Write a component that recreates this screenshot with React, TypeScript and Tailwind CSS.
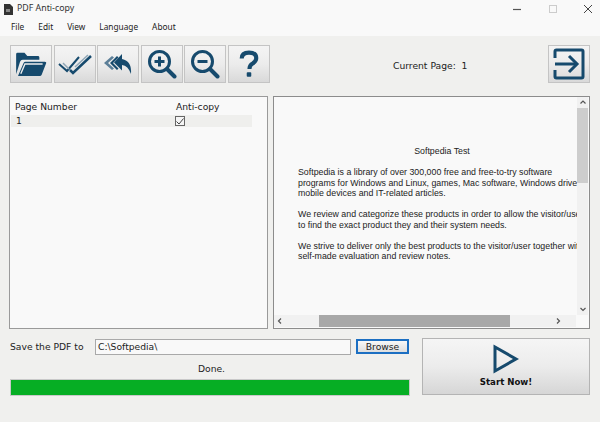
const blue = "#164a6d";

const toolClass =
  "w-[42px] h-[38px] shrink-0 flex items-center justify-center border border-[#c4c4c4] bg-gradient-to-b from-[#f4f4f4] via-[#ececec] to-[#d9d9d9]";

const IconFolder = () => (
  <svg width="34" height="26" viewBox="0 0 34 28">
    <path d="M1 25V3.500Q1 2 2.500 2H10l3 3.500h11.500Q26 5.500 26 7v2.500H8Q6 9.500 5.200 11.500L1 25z" fill={blue} />
    <path d="M3 27l6-14q.6-1.500 2-1.500h21q2 0 1.300 1.800L28.500 25.500q-.6 1.500-2 1.500H3z" fill={blue} />
    <path d="M6 24.500l4.500-10.500h19" fill="none" stroke="#eeeeee" strokeWidth="1.500" />
  </svg>
);

const IconChecks = () => (
  <svg width="34" height="22" viewBox="0 0 34 22">
    <path d="M1 11l8 7 L21 4" fill="none" stroke={blue} strokeWidth="2" />
    <path d="M5 10l6 6" fill="none" stroke="#8fa6b6" strokeWidth="1.500" />
    <path d="M12 17l3 3L33 3" fill="none" stroke={blue} strokeWidth="2.500" />
    <path d="M17 14L30 2" fill="none" stroke="#8fa6b6" strokeWidth="1.500" />
  </svg>
);

const IconReplyAll = () => (
  <svg width="30" height="22" viewBox="0 0 30 22">
    <path d="M9 3L1 10l8 7 2-1.500L5 10l6-5.500z" fill="#5c7f98" />
    <path d="M14 3L7 10l7 7 1.500-1.500L10 10l5.500-5.500z" fill={blue} />
    <path d="M19 1l-8 8.500 8 8V12q6 .5 9 9 1-13-9-15z" fill={blue} />
  </svg>
);

const IconZoom = ({ plus }: { plus?: boolean }) => (
  <svg width="30" height="30" viewBox="0 0 30 30">
    <circle cx="12.500" cy="12.500" r="10" fill="none" stroke={blue} strokeWidth="3" />
    <path d="M20 20l7.500 7.500" stroke={blue} strokeWidth="4" strokeLinecap="round" />
    <path d="M7.500 12.500h10" stroke={blue} strokeWidth="3" />
    {plus && <path d="M12.500 7.500v10" stroke={blue} strokeWidth="3" />}
  </svg>
);

const IconHelp = () => (
  <svg width="20" height="28" viewBox="0 0 22 30">
    <path d="M3 9q0-6.500 8-6.500 8 0 8 6 0 3.500-4 6-3.500 2-3.500 6" fill="none" stroke={blue} strokeWidth="4.500" />
    <rect x="8.500" y="24" width="5" height="5" rx="1" fill={blue} />
  </svg>
);

const IconExit = () => (
  <svg width="32" height="32" viewBox="0 0 32 32">
    <path d="M2 10V3.500Q2 2 3.500 2h25Q30 2 30 3.500v25q0 1.500-1.500 1.500h-25Q2 30 2 28.500V22" fill="none" stroke={blue} strokeWidth="3" />
    <path d="M2 16h21" stroke={blue} strokeWidth="3" />
    <path d="M16 8l8 8-8 8" fill="none" stroke={blue} strokeWidth="3" />
  </svg>
);

export default function App() {
  return (
    <div className="w-[600px] h-[422px] flex flex-col bg-[#f0f0ee] text-[#222] overflow-hidden font-['DejaVu_Sans',sans-serif] text-[9.2px]">
      {/* title + menu */}
      <div className="bg-[#f9f9f9] h-[36px] shrink-0">
        <div className="h-[18px] flex items-center pl-[4px] font-['Noto_Sans',sans-serif] text-[8.8px] text-[#333]">
          <svg width="9" height="11" viewBox="0 0 9 11" className="mr-[4px]">
            <path d="M0 0h6l3 3v8H0z" fill="#333" />
            <path d="M2 5h4v3H2z" fill="#888" />
          </svg>
          <span>PDF Anti-copy</span>
          <div className="ml-auto flex items-center text-[#444]">
            <svg width="10" height="10" viewBox="0 0 10 10" className="mr-[25px]">
              <path d="M0 5.500h8" stroke="#555" strokeWidth="1.200" />
            </svg>
            <svg width="10" height="10" viewBox="0 0 10 10" className="mr-[25px]">
              <rect x="1.500" y="1.500" width="7" height="7" fill="none" stroke="#ccc" />
            </svg>
            <svg width="10" height="10" viewBox="0 0 10 10" className="mr-[7px]">
              <path d="M1 1l8 8M9 1l-8 8" stroke="#444" strokeWidth="1" />
            </svg>
          </div>
        </div>
        <div className="h-[18px] flex items-center gap-[14px] pl-[11px] font-['Noto_Sans',sans-serif] text-[8.300px]">
          <span>File</span>
          <span>Edit</span>
          <span>View</span>
          <span>Language</span>
          <span>About</span>
        </div>
      </div>

      {/* toolbar */}
      <div className="flex items-center h-[38px] mt-[9px] pl-[10px] pr-[10px] shrink-0">
        <div className="flex gap-[1.600px]">
          <div className={toolClass}><IconFolder /></div>
          <div className={toolClass}><IconChecks /></div>
          <div className={toolClass}><IconReplyAll /></div>
          <div className={toolClass}><IconZoom plus /></div>
          <div className={toolClass}><IconZoom /></div>
          <div className={toolClass}><IconHelp /></div>
        </div>
        <div className="ml-[123px] mt-[3px]">Current Page:&nbsp; 1</div>
        <div className={toolClass + " ml-auto"}><IconExit /></div>
      </div>

      {/* panels */}
      <div className="flex gap-[5px] h-[233px] mt-[13px] pl-[9px] pr-[10px] shrink-0">
        <div className="w-[259px] border border-[#9a9a9a] bg-[#f9f9f9] pl-[1px] pt-[1px]">
          <div className="w-[241px] h-[17px] flex items-center">
            <span className="w-[161px] pl-[4px]">Page Number</span>
            <span className="pl-[4px]">Anti-copy</span>
          </div>
          <div className="w-[241px] h-[12px] flex items-center bg-[#efefed]">
            <span className="w-[161px] pl-[5px]">1</span>
            <span className="w-[10px] h-[10px] ml-[3px] border border-[#666] flex items-center justify-center bg-[#f5f5f5]">
              <svg width="8" height="7" viewBox="0 0 8 7">
                <path d="M0.500 3.500l2.500 2.500L7.500 0.500" fill="none" stroke="#444" strokeWidth="1" />
              </svg>
            </span>
          </div>
        </div>

        <div className="flex-1 border border-[#8c8c8c] bg-[#f9f9f9] flex flex-col min-w-0">
          <div className="flex-1 flex min-h-0">
            <div className="flex-1 min-w-0 overflow-hidden whitespace-nowrap font-['Liberation_Sans',sans-serif] text-[8.800px] leading-[10.500px] text-[#222] pl-[24px] pt-[49px]">
              <div className="w-[288px] text-center">Softpedia Test</div>
              <div className="mt-[10.500px]">Softpedia is a library of over 300,000 free and free-to-try software</div>
              <div>programs for Windows and Linux, games, Mac software, Windows drivers,</div>
              <div>mobile devices and IT-related articles.</div>
              <div className="mt-[10.500px]">We review and categorize these products in order to allow the visitor/user</div>
              <div>to find the exact product they and their system needs.</div>
              <div className="mt-[10.500px]">We strive to deliver only the best products to the visitor/user together with</div>
              <div>self-made evaluation and review notes.</div>
            </div>
            <div className="w-[11px] mr-[1px] shrink-0 bg-[#f1f1f1] flex flex-col items-center">
              <svg width="8" height="11" viewBox="0 0 8 11" className="shrink-0">
                <path d="M1.500 6.500L4 4l2.500 2.500" fill="none" stroke="#555" strokeWidth="1.200" />
              </svg>
              <div className="w-full h-[75px] bg-[#cdcdcd]" />
              <div className="flex-1" />
              <svg width="8" height="11" viewBox="0 0 8 11" className="shrink-0">
                <path d="M1.500 4L4 6.500 6.500 4" fill="none" stroke="#555" strokeWidth="1.200" />
              </svg>
            </div>
          </div>
          <div className="h-[12px] mb-[1px] mr-[13px] bg-[#f1f1f1] flex items-center shrink-0">
            <svg width="8" height="8" viewBox="0 0 8 8" className="ml-[2px] shrink-0">
              <path d="M5 1.500L2.500 4 5 6.500" fill="none" stroke="#555" strokeWidth="1.200" />
            </svg>
            <div className="ml-[35px] w-[191px] h-full bg-[#a8a8a8]" />
            <div className="flex-1" />
            <svg width="8" height="8" viewBox="0 0 8 8" className="mr-[14px] shrink-0">
              <path d="M3 1.500L5.500 4 3 6.500" fill="none" stroke="#555" strokeWidth="1.200" />
            </svg>
          </div>
        </div>
      </div>

      {/* bottom */}
      <div className="flex mt-[9px] pl-[10px] pr-[10px]">
        <div className="w-[400px] shrink-0 flex flex-col">
          <div className="h-[17px] flex items-center">
            <span className="w-[85px] shrink-0 whitespace-nowrap">Save the PDF to</span>
            <div className="w-[256px] h-[16px] border border-[#a9a9a9] bg-[#f9f9f9] pl-[2px] flex items-center">C:\Softpedia\</div>
            <div className="ml-[5px] w-[53px] h-[15px] border-2 border-[#1c6fc2] bg-gradient-to-b from-[#f8f8f8] to-[#dedede] flex items-center justify-center">Browse</div>
          </div>
          <div className="h-[13px] mt-[7px] pl-[3px] text-center">Done.</div>
          <div className="h-[17px] mt-[4px] border border-[#c9c9c9] bg-[#06ae24]" />
        </div>
        <div className="ml-[12px] w-[168px] h-[57px] border border-[#b4b4b4] bg-gradient-to-b from-[#f5f5f5] via-[#ececec] to-[#d6d6d6] flex flex-col items-center">
          <svg width="26" height="30" viewBox="0 0 26 30" className="mt-[5px] ml-[-1px] shrink-0">
            <path d="M2 3L23 15 2 27z" fill="none" stroke={blue} strokeWidth="3" />
          </svg>
          <div className="font-bold text-[8.600px] leading-[12px] mt-[2px] text-[#111]">Start Now!</div>
        </div>
      </div>
    </div>
  );
}
